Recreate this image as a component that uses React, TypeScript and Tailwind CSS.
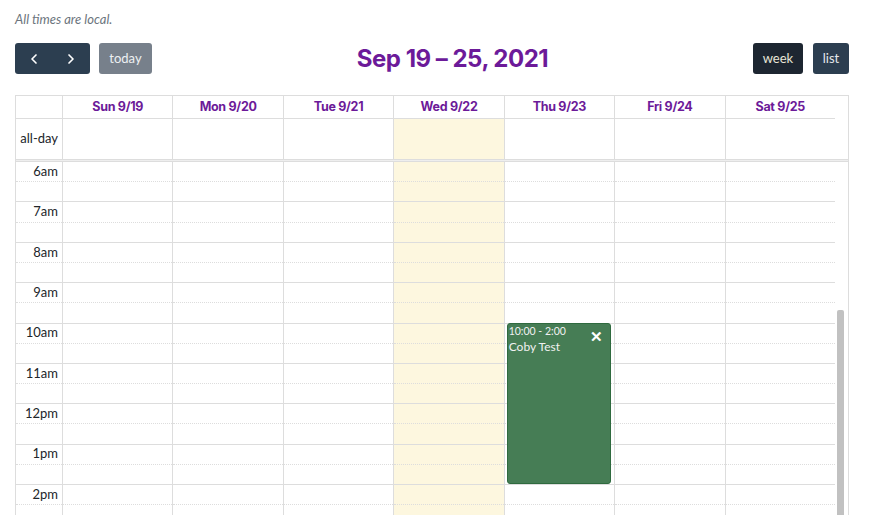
import { ChevronLeft, ChevronRight } from "lucide-react";

const days = ["Sun 9/19", "Mon 9/20", "Tue 9/21", "Wed 9/22", "Thu 9/23", "Fri 9/24", "Sat 9/25"];
const hours = ["6am", "7am", "8am", "9am", "10am", "11am", "12pm", "1pm", "2pm", "", ""];

function Slots() {
  return (
    <>
      {hours.map((h, i) => (
        <div key={i}>
          <div className="h-[20.2px] border-b border-dotted border-[#ddd]" />
          <div className="h-[20.2px] border-b border-[#ddd]" />
        </div>
      ))}
    </>
  );
}

function DayColumn({ index }: { index: number }) {
  const today = index === 3;
  return (
    <div className={`relative flex-1 border-l border-[#ddd] ${today ? "bg-[#fdf7df]" : ""}`}>
      <Slots />
      {index === 4 && (
        <div className="absolute left-[2px] right-[3px] top-[160.6px] h-[161.6px] rounded-[3px] border border-[#2f6a3f] bg-[#467d55] px-[1px] text-[#f1f1f1]">
          <div className="flex items-start justify-between">
            <div>
              <div className="text-[10.5px] leading-[14px]">10:00 - 2:00</div>
              <div className="mt-[2px] text-[12px] leading-[14px]">Coby Test</div>
            </div>
            <span className="mr-[6px] mt-[5px] text-[15px] font-bold leading-none text-white">✕</span>
          </div>
        </div>
      )}
    </div>
  );
}

export default function App() {
  return (
    <div className="h-[515px] overflow-hidden bg-white pl-[15px] pr-[24px] font-['Lato',sans-serif] text-[#212529]">
      {/* Note */}
      <p className="pt-[10px] text-[13px] italic leading-[18px] text-[#6c757d]">All times are local.</p>

      {/* Toolbar */}
      <div className="mt-[15px] flex h-[31px] items-center justify-between">
        <div className="flex items-center gap-[9px]">
          <div className="flex h-[31px] overflow-hidden rounded-[3px] bg-[#2c3e50] text-white">
            <button className="flex w-[37px] items-center justify-center">
              <ChevronLeft size={16} strokeWidth={2.5} />
            </button>
            <button className="flex w-[38px] items-center justify-center">
              <ChevronRight size={16} strokeWidth={2.5} />
            </button>
          </div>
          <button className="h-[31px] w-[53px] rounded-[3px] bg-[#77808b] text-[13px] text-[#eef0f2]">today</button>
        </div>

        <h2 className="font-['Inter',sans-serif] text-[24px] font-bold tracking-[-0.5px] text-[#6c1a99]">
          Sep 19 – 25, 2021
        </h2>

        <div className="flex items-center gap-[10px]">
          <button className="h-[31px] w-[50px] rounded-[3px] bg-[#1d2631] text-[13px] text-[#e9e6d8]">week</button>
          <button className="h-[31px] w-[36px] rounded-[3px] bg-[#2c3e50] text-[13px] text-[#e6e9ec]">list</button>
        </div>
      </div>

      {/* Calendar */}
      <div className="mt-[21px] border-l border-r border-t border-[#ddd]">
        {/* Day headers */}
        <div className="flex">
          <div className="flex flex-1 border-b border-[#ddd]">
            <div className="w-[46px]" />
            {days.map((d) => (
              <div
                key={d}
                className="flex h-[22px] flex-1 items-center justify-center border-l border-[#ddd] font-['Inter',sans-serif] text-[12.5px] font-bold tracking-[-0.3px] text-[#6c1a99]"
              >
                {d}
              </div>
            ))}
          </div>
          <div className="w-[13px]" />
        </div>

        {/* All-day row */}
        <div className="flex h-[40px]">
          <div className="flex w-[46px] items-center justify-end pr-[4px] text-[13px]">all-day</div>
          {days.map((d, i) => (
            <div key={d} className={`flex-1 border-l border-[#ddd] ${i === 3 ? "bg-[#fdf7df]" : ""}`} />
          ))}
          <div className="w-[13px]" />
        </div>

        {/* Divider */}
        <div className="h-[3px] border-y border-[#ddd] bg-[#eee]" />

        {/* Time grid */}
        <div className="flex">
          <div className="flex flex-1">
            <div className="w-[46px]">
              {hours.map((h, i) => (
                <div key={i}>
                  <div className="flex h-[20.2px] items-center justify-end border-b border-dotted border-[#ddd] pr-[4px] text-[13px]">
                    {h}
                  </div>
                  <div className="h-[20.2px] border-b border-[#ddd]" />
                </div>
              ))}
            </div>
            {days.map((d, i) => (
              <DayColumn key={d} index={i} />
            ))}
          </div>

          {/* Scrollbar */}
          <div className="w-[13px] pl-[2px] pt-[148px]">
            <div className="h-[300px] w-[7px] rounded-t-[2px] bg-[#c1c1c1]" />
          </div>
        </div>
      </div>
    </div>
  );
}
